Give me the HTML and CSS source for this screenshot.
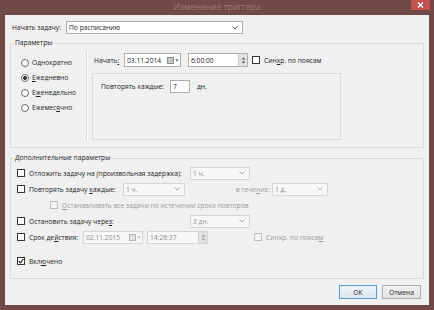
FILE: index.html
```html
<!DOCTYPE html>
<html lang="ru">
<head>
  <meta charset="UTF-8">
  <title>Изменение триггера</title>
  <link rel="stylesheet" href="styles.css">
</head>
<body>

<div class="window">
  <div class="titlebar">
    <span class="title">Изменение триггера</span>
    <span class="close">
      <svg width="7" height="6" viewBox="0 0 7 6"><path d="M1 0.5 L6 5.5 M6 0.5 L1 5.5" stroke="#fff" stroke-width="1.4"/></svg>
    </span>
  </div>

  <div class="client">
    <div class="start-row">
      <span class="start-label">Начать задачу:</span>
      <div class="combo combo-main">
        <span class="combo-text">По расписанию</span>
        <svg class="chev" width="6" height="4" viewBox="0 0 6 4"><path d="M0.5 0.5 L3 3 L5.5 0.5" fill="none" stroke="#555"/></svg>
      </div>
    </div>

    <fieldset class="group params">
      <legend>Параметры</legend>
      <div class="params-body">
        <div class="radios">
          <div class="radio-row"><span class="rb"></span>Однократно</div>
          <div class="radio-row"><span class="rb on"></span><u>Е</u>жедневно</div>
          <div class="radio-row"><span class="rb"></span>Е<u>ж</u>енедельно</div>
          <div class="radio-row"><span class="rb"></span>Ежемес<u>я</u>чно</div>
        </div>
        <div class="vsep"></div>
        <div class="schedule">
          <div class="begin-row">
            <span class="begin-label">Начать<u>:</u></span>
            <div class="field date">
              <span>03.11.2014</span>
              <svg class="cal" width="12" height="7" viewBox="0 0 12 7"><rect x="0.5" y="0.5" width="6" height="6" fill="#c8c8c8" stroke="#8c8c8c"/><path d="M8.5 2.5 L11.5 2.5 L10 4.5 Z" fill="#444"/></svg>
            </div>
            <div class="field time">
              <span>6:00:00</span>
              <span class="spin">
                <svg width="5" height="9" viewBox="0 0 5 9"><path d="M0.5 3.5 L4.5 3.5 L2.5 1.5 Z M0.5 5.5 L4.5 5.5 L2.5 7.5 Z" fill="#555"/></svg>
              </span>
            </div>
            <span class="cb"></span>
            <span class="cb-text">Син<u>х</u>р. по поясам</span>
          </div>
          <div class="repeat-panel">
            <span class="repeat-label">Повторять каждые:</span>
            <div class="field num">7</div>
            <span class="unit">дн.</span>
          </div>
        </div>
      </div>
    </fieldset>

    <fieldset class="group extra">
      <legend>Дополнительные параметры</legend>
      <div class="extra-body">
        <div class="row">
          <span class="cb"></span>
          <span class="row-label w-long">Отложить задачу на <u>(</u>произвольная задержка):</span>
          <div class="combo off w60"><span class="combo-text">1 ч.</span><svg class="chev" width="6" height="4" viewBox="0 0 6 4"><path d="M0.5 0.5 L3 3 L5.5 0.5" fill="none" stroke="#aaa"/></svg></div>
        </div>
        <div class="row">
          <span class="cb"></span>
          <span class="row-label w-repeat">Повторять задачу <u>к</u>аждые:</span>
          <div class="combo off w62"><span class="combo-text">1 ч.</span><svg class="chev" width="6" height="4" viewBox="0 0 6 4"><path d="M0.5 0.5 L3 3 L5.5 0.5" fill="none" stroke="#aaa"/></svg></div>
          <span class="during dim">в тече<u>н</u>ие:</span>
          <div class="combo off w56"><span class="combo-text">1 д.</span><svg class="chev" width="6" height="4" viewBox="0 0 6 4"><path d="M0.5 0.5 L3 3 L5.5 0.5" fill="none" stroke="#aaa"/></svg></div>
        </div>
        <div class="row indent">
          <span class="cb off"></span>
          <span class="row-text dim"><u>О</u>станавливать все задачи по истечении срока повторов</span>
        </div>
        <div class="row">
          <span class="cb"></span>
          <span class="row-label w-long">Остановить задачу чере<u>з</u>:</span>
          <div class="combo off w60"><span class="combo-text">3 дн.</span><svg class="chev" width="6" height="4" viewBox="0 0 6 4"><path d="M0.5 0.5 L3 3 L5.5 0.5" fill="none" stroke="#aaa"/></svg></div>
        </div>
        <div class="row">
          <span class="cb"></span>
          <span class="row-label w-expire">Срок де<u>й</u>ствия:</span>
          <div class="field off date2">
            <span>02.11.2015</span>
            <svg class="cal" width="12" height="7" viewBox="0 0 12 7"><rect x="0.5" y="0.5" width="6" height="6" fill="#e2e2e2" stroke="#b5b5b5"/><path d="M8.5 2.5 L11.5 2.5 L10 4.5 Z" fill="#aaa"/></svg>
          </div>
          <div class="field off time2">
            <span>14:26:37</span>
            <span class="spin">
              <svg width="5" height="9" viewBox="0 0 5 9"><path d="M0.5 3.5 L4.5 3.5 L2.5 1.5 Z M0.5 5.5 L4.5 5.5 L2.5 7.5 Z" fill="#999"/></svg>
            </span>
          </div>
          <span class="cb off sync2"></span>
          <span class="cb-text dim">Синхр. по пояса<u>м</u></span>
        </div>
        <div class="row enabled-row">
          <span class="cb checked">
            <svg width="6" height="6" viewBox="0 0 6 6"><path d="M0.6 3 L2.3 4.8 L5.4 0.8" fill="none" stroke="#222" stroke-width="1.1"/></svg>
          </span>
          <span class="row-text">Вкл<u>ю</u>чено</span>
        </div>
      </div>
    </fieldset>

    <div class="buttons">
      <button class="btn default">ОК</button>
      <button class="btn">Отмена</button>
    </div>
  </div>
</div>

</body>
</html>
```

FILE: styles.css
```css
body {
  margin: 0;
  font-family: "Open Sans", "Noto Sans", sans-serif;
  font-size: 6.7px;
  color: #222;
  white-space: nowrap;
}

u {
  text-decoration-thickness: 1px;
  text-underline-offset: 1px;
}

.window {
  width: 434px;
  height: 310px;
  box-sizing: border-box;
  padding: 0 5px 5px;
  background-color: #6f4a46;
  display: flex;
  flex-direction: column;
}

.titlebar {
  height: 15px;
  display: grid;
  grid-template-columns: 1fr auto 1fr;
  align-items: start;
}

.title {
  grid-column: 2;
  color: #a17670;
  font-size: 8.6px;
  line-height: 14px;
}

.close {
  grid-column: 3;
  justify-self: end;
  width: 19px;
  height: 10px;
  margin-right: -1px;
  background-color: #c7504c;
  display: flex;
  align-items: center;
  justify-content: center;
}

.client {
  flex: 1;
  background-color: #f0f0f0;
  display: flex;
  flex-direction: column;
}

/* top line */

.start-row {
  display: flex;
  align-items: center;
  padding: 6px 0 0 7px;
}

.start-label {
  width: 54px;
}

.combo,
.field {
  height: 13px;
  box-sizing: border-box;
  border: 1px solid #abadb3;
  background-color: #fff;
  display: flex;
  align-items: center;
  padding-left: 2px;
  line-height: 11px;
}

.combo-text {
  flex: 1;
}

.chev {
  margin-right: 4px;
}

.combo-main {
  width: 177px;
  height: 13px;
}

.combo.off,
.field.off {
  border-color: #d4d4d4;
  background-color: #f7f7f7;
  color: #8d8d8d;
}

.w60 { width: 60px; }
.w62 { width: 62px; }
.w56 { width: 56px; }

/* group boxes */

.group {
  margin: 0 5px;
  padding: 0;
  border: 1px solid #dadada;
  min-width: 0;
}

.group legend {
  margin-left: 3px;
  padding: 0 1px;
  line-height: 10px;
}

.params {
  margin-top: 4px;
}

.params-body {
  height: 99px;
  display: flex;
}

.radios {
  width: 65px;
  padding: 7px 0 0 10px;
}

.radio-row {
  height: 15px;
  display: flex;
  align-items: center;
}

.rb {
  width: 8px;
  height: 8px;
  box-sizing: border-box;
  border: 1px solid #6b6b6b;
  border-radius: 50%;
  background-color: #fff;
  margin-right: 3px;
}

.rb.on {
  background: radial-gradient(circle, #333 0 1.6px, #fff 2.2px);
}

.vsep {
  width: 1px;
  margin: 3px 0 7px;
  background-color: #d4d4d4;
  border-right: 1px solid #fff;
}

.schedule {
  padding-left: 4px;
}

.begin-row {
  display: flex;
  align-items: center;
  margin-top: 5px;
  padding-left: 2px;
  height: 14px;
}

.begin-label {
  width: 30px;
}

.date {
  width: 57px;
  height: 14px;
}

.date span,
.time span,
.date2 span,
.time2 span {
  flex: 1;
}

.cal {
  margin-right: 1px;
}

.time {
  width: 60px;
  height: 14px;
  margin-left: 7px;
}

.spin {
  flex: none !important;
  width: 8px;
  align-self: stretch;
  background-color: #e3e3e3;
  border-left: 1px solid #c9c9c9;
  display: flex;
  align-items: center;
  justify-content: center;
}

.cb {
  width: 8px;
  height: 8px;
  box-sizing: border-box;
  border: 1px solid #333;
  background-color: #fff;
  flex: none;
  display: flex;
  align-items: center;
  justify-content: center;
}

.cb.off {
  border-color: #bdbdbd;
  background-color: #f4f4f4;
}

.begin-row .cb {
  margin-left: 4px;
}

.cb-text {
  margin-left: 4px;
}

.repeat-panel {
  width: 249px;
  height: 67px;
  box-sizing: border-box;
  margin-top: 6px;
  border: 1px solid #dadada;
  padding: 6px 0 0 8px;
  display: flex;
  align-items: flex-start;
}

.repeat-label {
  width: 69px;
  line-height: 13px;
}

.num {
  width: 20px;
  height: 13px;
}

.unit {
  margin-left: 7px;
  line-height: 13px;
}

/* additional parameters */

.extra {
  margin-top: 5px;
}

.extra-body {
  padding: 2px 0 9px 6px;
}

.row {
  height: 16px;
  display: flex;
  align-items: center;
}

.row-label {
  margin-left: 4px;
}

.w-long { width: 161px; }
.w-repeat { width: 94px; }
.w-expire { width: 54px; }

.during {
  width: 85px;
  text-align: right;
  padding-right: 2px;
}

.dim {
  color: #9a9a9a;
}

.indent {
  padding-left: 33px;
}

.row-text {
  margin-left: 4px;
}

.date2 {
  width: 60px;
  height: 13px;
}

.time2 {
  width: 61px;
  height: 13px;
  margin-left: 4px;
}

.sync2 {
  margin-left: 46px;
}

.enabled-row {
  margin-top: 8px;
}

/* buttons */

.buttons {
  display: flex;
  justify-content: flex-end;
  gap: 5px;
  padding: 6px 8px 0 0;
}

.btn {
  height: 14px;
  padding: 0;
  font-family: inherit;
  font-size: 6.7px;
  color: #222;
  background: linear-gradient(#f2f2f2, #e2e2e2);
  border: 1px solid #acacac;
  width: 39px;
}

.btn.default {
  width: 38px;
  border-color: #5b9bd0;
  background: linear-gradient(#f0f4f8, #dde6ee);
}
```
